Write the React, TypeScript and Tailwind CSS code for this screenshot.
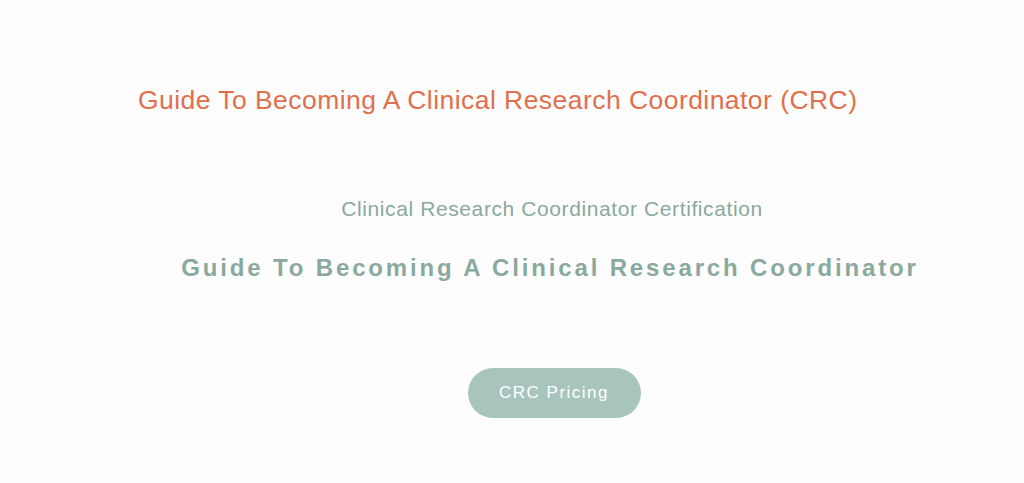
export default function App() {
  return (
    <div
      className="w-[1024px] h-[483px] bg-[#fdfdfd] overflow-hidden"
      style={{ fontFamily: '"Liberation Sans", Arial, sans-serif' }}
    >
      {/* Page title */}
      <h1 className="pt-[83px] pl-[138px] text-[26.5px] leading-[34px] tracking-[0.45px] text-[#e0704d]">
        Guide To Becoming A Clinical Research Coordinator (CRC)
      </h1>

      {/* Hero block */}
      <div className="pl-[80px] flex flex-col items-center">
        <p className="mt-[78px] text-[21px] leading-[28px] tracking-[0.6px] text-[#8aa99e]">
          Clinical Research Coordinator Certification
        </p>
        <h2 className="mt-[29px] -ml-[4px] text-[24px] leading-[32px] font-bold tracking-[2.85px] text-[#8aa99e]">
          Guide To Becoming A Clinical Research Coordinator
        </h2>
        <button className="mt-[84px] ml-[4px] w-[173px] h-[50px] rounded-full bg-[#a8c5bd] text-white text-[17px] tracking-[1.5px]">
          CRC Pricing
        </button>
      </div>
    </div>
  );
}
